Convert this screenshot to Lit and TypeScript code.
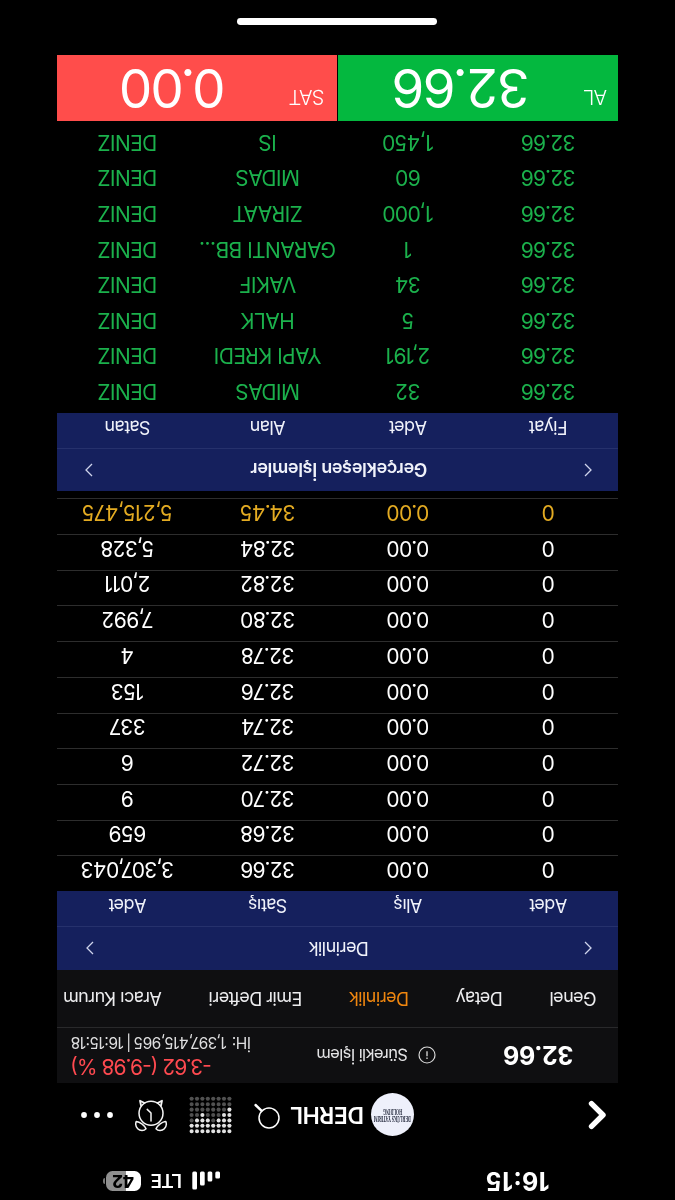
import { LitElement, html, css, svg } from "lit";
import { customElement, property } from "lit/decorators.js";

const asks: string[][] = [
  ["0", "0.00", "32.66", "3,307,043"],
  ["0", "0.00", "32.68", "659"],
  ["0", "0.00", "32.70", "9"],
  ["0", "0.00", "32.72", "6"],
  ["0", "0.00", "32.74", "337"],
  ["0", "0.00", "32.76", "153"],
  ["0", "0.00", "32.78", "4"],
  ["0", "0.00", "32.80", "7,992"],
  ["0", "0.00", "32.82", "2,011"],
  ["0", "0.00", "32.84", "5,328"],
  ["0", "0.00", "34.45", "5,215,475"],
];

const trades: string[][] = [
  ["32.66", "32", "MIDAS", "DENIZ"],
  ["32.66", "2,191", "YAPI KREDI", "DENIZ"],
  ["32.66", "5", "HALK", "DENIZ"],
  ["32.66", "34", "VAKIF", "DENIZ"],
  ["32.66", "1", "GARANTI BB...", "DENIZ"],
  ["32.66", "1,000", "ZIRAAT", "DENIZ"],
  ["32.66", "60", "MIDAS", "DENIZ"],
  ["32.66", "1,450", "IS", "DENIZ"],
];

// Lit dots per column of the matrix icon, counted from its upper edge.
const matrix = [5, 4, 3, 2, 3, 4, 3, 2];

@customElement("section-head")
export class SectionHead extends LitElement {
  @property() title = "";
  @property({ type: Boolean }) strong = false;
  @property({ type: Array }) columns: string[] = [];

  static styles = css`
    :host { display: block; background: #15205d; color: #f0f2fa; }
    .bar {
      display: flex; align-items: center; justify-content: space-between;
      box-sizing: border-box; height: 44px; padding: 0 28px 0 26px;
      border-bottom: 1px solid #26316c;
      font-size: 18px; letter-spacing: -0.55px;
    }
    .bar.strong { height: 43px; font-weight: 600; letter-spacing: -0.3px; font-size: 18px; }
    .columns {
      display: grid; grid-template-columns: repeat(4, 1fr);
      height: 35px; line-height: 41px; text-align: center;
      font-size: 18px; letter-spacing: -0.55px;
    }
  `;

  render() {
    return html`
      <div class="bar ${this.strong ? "strong" : ""}">
        <svg width="8" height="14" viewBox="0 0 8 14" fill="none" stroke="#cfd4ec" stroke-width="1.3"><path d="M7 1 1 7l6 6" /></svg>
        <span>${this.title}</span>
        <svg width="8" height="14" viewBox="0 0 8 14" fill="none" stroke="#cfd4ec" stroke-width="1.3"><path d="m1 1 6 6-6 6" /></svg>
      </div>
      <div class="columns">${this.columns.map((c) => html`<span>${c}</span>`)}</div>
    `;
  }
}

@customElement("app-root")
export class AppRoot extends LitElement {
  static styles = css`
    :host {
      display: block; width: 675px; height: 1200px; overflow: hidden;
      background: #000; color: #fff;
      font-family: Inter, "Liberation Sans", sans-serif;
    }
    .screen {
      display: flex; flex-direction: column; box-sizing: border-box;
      width: 675px; height: 1200px; padding: 0 57.5px 0 56.5px;
      transform: rotate(180deg); white-space: nowrap;
    }
    svg { display: block; flex: none; }

    .status { display: flex; align-items: center; height: 38px; margin-right: 45.5px; }
    .time { font-weight: 700; font-size: 25px; letter-spacing: 0.4px; margin-left: 69px; }
    .signal { margin-left: auto; }
    .lte { font-weight: 600; font-size: 19px; letter-spacing: -0.8px; margin: 0 11px 0 10px; width: 30px; }
    .battery {
      width: 35px; height: 20px; border-radius: 6.5px; line-height: 20px; text-align: center;
      background: linear-gradient(90deg, #fff 15px, #8f8f8f 15px);
      color: #000; font-weight: 800; font-size: 17px; letter-spacing: -0.4px;
    }
    .nub { width: 2px; height: 6px; margin-left: 1px; border-radius: 0 2px 2px 0; background: #777; }

    .nav { display: flex; align-items: center; height: 60px; margin: 17px 0 2px; }
    .back { margin-left: 10.5px; }
    .logo {
      display: flex; flex-direction: column; align-items: center; justify-content: center;
      width: 43px; height: 43px; margin-left: 174px; border-radius: 50%;
      background: #eef0fb; color: #23283c; box-sizing: border-box; padding-bottom: 1px;
      font: 700 8px/7px "Liberation Serif", serif;
    }
    .logo span { transform: scaleX(0.49); }
    .symbol { font-weight: 600; font-size: 23px; letter-spacing: -0.4px; width: 73px; margin-left: 7px; }
    .search { margin-left: 10px; }
    .matrix { margin-left: 21px; }
    .alarm { margin-left: 21px; margin-top: 2px; }
    .more { margin-left: 20px; }

    .quote {
      display: flex; align-items: center; box-sizing: border-box; height: 56px; flex: none;
      padding: 0 13.5px 0 45px; background: #0f0f11; border-bottom: 1px solid #29292b;
    }
    .price { font-size: 25px; font-weight: 700; width: 80px; letter-spacing: -0.4px; }
    .info { margin-left: 57px; }
    .session { font-size: 16.5px; letter-spacing: -0.6px; margin-left: 10.5px; color: #e4e4e6; }
    .change {
      display: flex; flex-direction: column; align-items: flex-end; gap: 2px;
      margin-left: auto; color: #ff4a50; font-size: 21px; line-height: 24px; letter-spacing: -0.95px;
    }
    .volume { color: #dededf; font-size: 15.5px; line-height: 20px; white-space: pre; letter-spacing: -0.45px; word-spacing: -1.2px; }

    .tabs {
      display: flex; align-items: center; justify-content: space-between; box-sizing: border-box;
      height: 57px; flex: none; padding: 0 6px 0 22px; background: #0f0f11; color: #ececee;
      font-size: 18px; letter-spacing: -0.55px;
    }
    .active { color: #ef860f; }

    .row {
      display: grid; grid-template-columns: repeat(4, 1fr); box-sizing: border-box;
      height: 35.7px; line-height: 43px; text-align: center;
      border-bottom: 1px solid #2d2d2d;
      font-size: 21px; font-weight: 400; letter-spacing: -0.6px;
    }
    .row.total { color: #e3ab22; }
    .asks { height: 400px; flex: none; }
    .trades { height: 285px; flex: none; padding-top: 1px; color: #1bb14c; }
    .trades .row { height: 35.6px; line-height: 42px; border: 0; }

    .actions { display: grid; grid-template-columns: 1fr 1fr; gap: 1px; height: 66px; margin-top: 5.5px; flex: none; }
    .action { display: flex; align-items: center; justify-content: space-between; }
    .buy { background: #04b83f; padding: 0 54.5px 0 11.5px; letter-spacing: -1.6px; }
    .sell { background: #ff4d4b; padding: 0 63.5px 0 13px; letter-spacing: -2.1px; }
    .side { font-size: 20px; font-weight: 300; letter-spacing: -0.6px; padding-bottom: 17px; }
    .amount { font-size: 53px; font-weight: 400; line-height: 66px; }
    .home { width: 200px; height: 7px; border-radius: 4px; background: #fff; margin: 30px 0 0 181.5px; flex: none; }
  `;

  render() {
    return html`
      <div class="screen">
        <div class="status">
          <span class="time">16:15</span>
          <svg class="signal" width="28" height="19" viewBox="0 0 28 19" fill="#fff">
            <rect x="0" y="11.5" width="4.7" height="7" rx="1.4" />
            <rect x="7.7" y="8.5" width="4.7" height="10" rx="1.4" />
            <rect x="15.3" y="4.5" width="4.7" height="14" rx="1.4" />
            <rect x="23" y="0.5" width="4.7" height="18" rx="1.4" />
          </svg>
          <span class="lte">LTE</span>
          <span class="battery">42</span><span class="nub"></span>
        </div>

        <div class="nav">
          <svg class="back" width="20" height="32" viewBox="0 0 20 32" fill="none" stroke="#fff" stroke-width="5.4" stroke-linecap="round" stroke-linejoin="round"><path d="M16.500 4.600 5 16l11.500 11.400" /></svg>
          <div class="logo"><span>DERLÜKS YATIRIM</span><span>HOLDING</span></div>
          <span class="symbol">DERHL</span>
          <svg class="search" width="28" height="32" viewBox="0 0 28 32" fill="none" stroke="#fff" stroke-width="1.5"><circle cx="12" cy="13" r="10" /><path d="m19.3 20.2 6.2 5.800" stroke-width="2.4" stroke-linecap="round" /></svg>
          <svg class="matrix" width="43" height="38" viewBox="0 0 43 38">
            ${matrix.map((n, c) =>
              Array.from({ length: 7 }, (_, r) => svg`<circle cx=${2.6 + c * 5.4} cy=${2.8 + r * 5.4} r="2.05" fill=${r < n ? "#e2e2e2" : "#515151"} />`)
            )}
          </svg>
          <svg class="alarm" width="34" height="40" viewBox="0 0 34 40" fill="none" stroke="#f4f4f4" stroke-width="1.5" stroke-linecap="round" stroke-linejoin="round">
            <circle cx="17" cy="20.7" r="12" />
            <path d="M17 13v8l3.8 3.6" />
            <path d="M22 5.200c2-2.300 6-2.200 8.300 0c2.200 2.200 2.300 5.200 1.500 7.400c-3.300-.500-8.500-3.800-9.800-7.400ZM12 5.200c-2-2.300-6-2.200-8.300 0c-2.200 2.200-2.300 5.200-1.500 7.400c3.300-.500 8.500-3.800 9.800-7.400Z" />
            <path d="m27 28.500 1 4.800-4.500-2.300M7 28.500l-1 4.800 4.500-2.300" stroke-width="1.8" />
          </svg>
          <svg class="more" width="34" height="8" viewBox="0 0 34 8" fill="#fff"><circle cx="4" cy="4" r="2.9" /><circle cx="17" cy="4" r="2.9" /><circle cx="30" cy="4" r="2.9" /></svg>
        </div>

        <div class="quote">
          <span class="price">32.66</span>
          <svg class="info" width="18" height="18" viewBox="0 0 18 18" fill="none" stroke="#dcdcdc" stroke-width="1.1"><circle cx="9" cy="9" r="8" /><path d="M9 7.700v5M9 5v1.400" stroke-width="1.3" /></svg>
          <span class="session">Sürekli İşlem</span>
          <div class="change"><span>-3.62 (-9.98 %)</span><span class="volume">İH:  1,397,415,965 | 16:15:18</span></div>
        </div>

        <div class="tabs">
          <span>Genel</span><span>Detay</span><span class="active">Derinlik</span><span>Emir Defteri</span><span>Aracı Kurum</span>
        </div>

        <section-head title="Derinlik" .columns=${["Adet", "Alış", "Satış", "Adet"]}></section-head>
        <div class="asks">
          ${asks.map((r, i) => html`<div class="row ${i === asks.length - 1 ? "total" : ""}">${r.map((v) => html`<span>${v}</span>`)}</div>`)}
        </div>

        <section-head title="Gerçekleşen İşlemler" strong .columns=${["Fiyat", "Adet", "Alan", "Satan"]}></section-head>
        <div class="trades">
          ${trades.map((r) => html`<div class="row">${r.map((v) => html`<span>${v}</span>`)}</div>`)}
        </div>

        <div class="actions">
          <div class="action buy"><span class="side">AL</span><span class="amount">32.66</span></div>
          <div class="action sell"><span class="side">SAT</span><span class="amount">0.00</span></div>
        </div>
        <div class="home"></div>
      </div>
    `;
  }
}
